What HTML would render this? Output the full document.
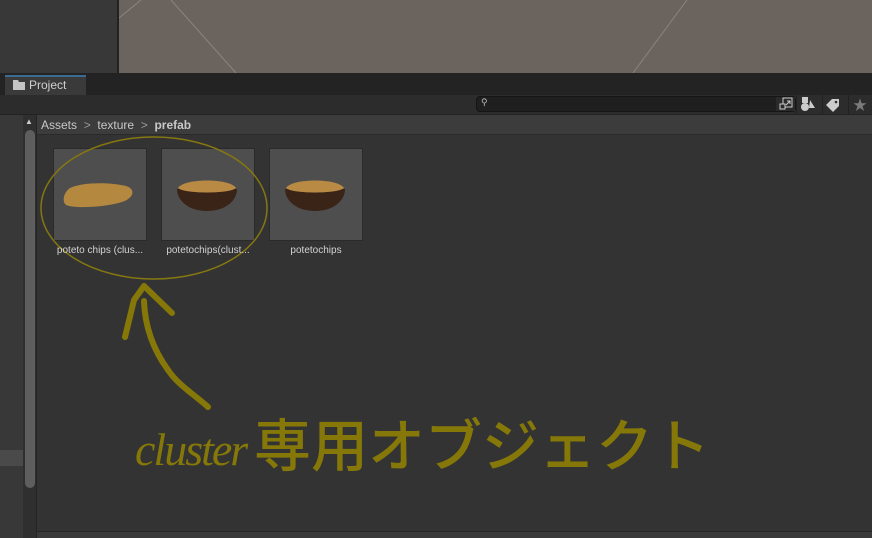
<!DOCTYPE html>
<html><head><meta charset="utf-8"><style>
*{margin:0;padding:0;box-sizing:border-box}
body{width:872px;height:538px;overflow:hidden;background:#333;position:relative;font-family:"Liberation Sans","Noto Sans CJK JP",sans-serif}
.a{position:absolute}
.thumb{position:absolute;top:148px;width:94px;height:93px;background:#4e4e4e;border:1px solid #2a2a2a}
.lbl{position:absolute;top:245px;font-size:10px;color:#d2d2d2;width:110px;text-align:center}
</style></head><body>
<div class="a" style="left:0;top:0;width:117px;height:73px;background:#383838"></div>
<div class="a" style="left:117px;top:0;width:2px;height:73px;background:#222"></div>
<div class="a" style="left:119px;top:0;width:753px;height:73px;background:#6b645e"></div>
<svg class="a" style="left:119px;top:0" width="753" height="73"><g stroke="#8a847e" stroke-width="1" fill="none"><line x1="0" y1="18" x2="22" y2="0"/><line x1="52" y1="0" x2="117" y2="73"/><line x1="568" y1="0" x2="514" y2="73"/></g></svg>
<div class="a" style="left:0;top:73px;width:872px;height:22px;background:#232323"></div>
<div class="a" style="left:5px;top:75px;width:81px;height:20px;background:#3a3a3a;border-top:2px solid #3d6a93"></div>
<svg class="a" style="left:13px;top:80px" width="12" height="10"><path d="M0 0h5l1 2h6v8H0z" fill="#c4c4c4"/></svg>
<div class="a" style="left:29px;top:78px;font-size:12px;color:#d0d0d0">Project</div>
<div class="a" style="left:0;top:95px;width:872px;height:20px;background:#2c2c2c;border-bottom:1px solid #222"></div>
<div class="a" style="left:476px;top:96px;width:320px;height:16px;background:#1f1f1f;border:1px solid #151515;border-radius:4px"></div>
<div class="a" style="left:481px;top:97px;font-size:9px;color:#bbb">&#9906;</div>
<div class="a" style="left:776px;top:97px;width:19px;height:14px;background:#2a2a2a"></div>
<svg class="a" style="left:779px;top:97px" width="14" height="14"><rect x="4" y="1" width="9" height="9" fill="none" stroke="#ccc"/><rect x="1" y="7" width="5" height="5" fill="#2a2a2a" stroke="#ccc"/><path d="M7 8l4-4M8 4h3v3" stroke="#ccc" fill="none"/></svg>
<div class="a" style="left:796px;top:95px;width:1px;height:20px;background:#222"></div>
<svg class="a" style="left:801px;top:97px" width="16" height="16"><rect x="1" y="0" width="6" height="6" fill="#ccc"/><circle cx="4" cy="10" r="4" fill="#ccc"/><path d="M9 3l5 8H8z" fill="#ccc"/></svg>
<div class="a" style="left:822px;top:95px;width:1px;height:20px;background:#222"></div>
<svg class="a" style="left:826px;top:97px" width="16" height="16"><path d="M6 2h7v7l-6 6-7-7z" fill="#ccc"/><circle cx="10" cy="5" r="1.3" fill="#2c2c2c"/></svg>
<div class="a" style="left:848px;top:95px;width:1px;height:20px;background:#222"></div>
<div class="a" style="left:853px;top:95px;font-size:14px;color:#7a7a7a">&#9733;</div>
<div class="a" style="left:0;top:115px;width:23px;height:423px;background:#383838"></div>
<div class="a" style="left:0;top:450px;width:23px;height:16px;background:#4a4a4a"></div>
<div class="a" style="left:23px;top:115px;width:14px;height:423px;background:#2f2f2f;border-right:1px solid #242424"></div>
<div class="a" style="left:25px;top:117px;font-size:8px;color:#ccc">&#9650;</div>
<div class="a" style="left:25px;top:130px;width:10px;height:358px;background:#5e5e5e;border-radius:5px"></div>
<div class="a" style="left:37px;top:115px;width:835px;height:20px;background:#3c3c3c;border-bottom:1px solid #2a2a2a"></div>
<div class="a" style="left:41px;top:118px;font-size:12px;color:#c8c8c8">Assets <span style="color:#999">&nbsp;&gt;&nbsp;</span> texture <span style="color:#999">&nbsp;&gt;&nbsp;</span> <b>prefab</b></div>
<div class="thumb" style="left:53px"></div>
<div class="thumb" style="left:161px"></div>
<div class="thumb" style="left:269px"></div>
<svg class="a" style="left:0;top:0" width="872" height="538">
<path d="M70 188c12-6 40-6 56-2 10 3 8 12-4 16-16 5-46 7-56 3-4-3-3-12 4-17z" fill="#b4883e"/>
<path d="M177 189h60c0 12-12 22-30 22s-30-10-30-22z" fill="#3a2418"/><path d="M178 188c6-10 52-10 58 0-6 6-52 6-58 0z" fill="#b88a44"/>
<path d="M285 189h60c0 12-12 22-30 22s-30-10-30-22z" fill="#3a2418"/><path d="M286 188c6-10 52-10 58 0-6 6-52 6-58 0z" fill="#b88a44"/>
<ellipse cx="154" cy="208" rx="113" ry="71" fill="none" stroke="#857810" stroke-width="1.5"/>
<g stroke="#857808" stroke-width="6" fill="none" stroke-linecap="round" stroke-linejoin="round">
<path d="M125 337L134 300L144 286L172 313"/>
<path d="M144 301C145 330 155 352 168 370C178 385 195 395 208 407"/>
</g>
<text x="135" y="465" font-family="Liberation Serif,serif" font-style="italic" font-size="46" fill="#857808" letter-spacing="-2">cluster</text>
<text x="254" y="466" font-family="Noto Sans CJK JP,sans-serif" font-weight="500" font-size="57" fill="#857808">専用オブジェクト</text>
</svg>
<div class="lbl" style="left:45px">poteto chips (clus...</div>
<div class="lbl" style="left:153px">potetochips(clust...</div>
<div class="lbl" style="left:261px">potetochips</div>
<div class="a" style="left:37px;top:531px;width:835px;height:7px;background:#3a3a3a;border-top:1px solid #262626"></div>
</body></html>
